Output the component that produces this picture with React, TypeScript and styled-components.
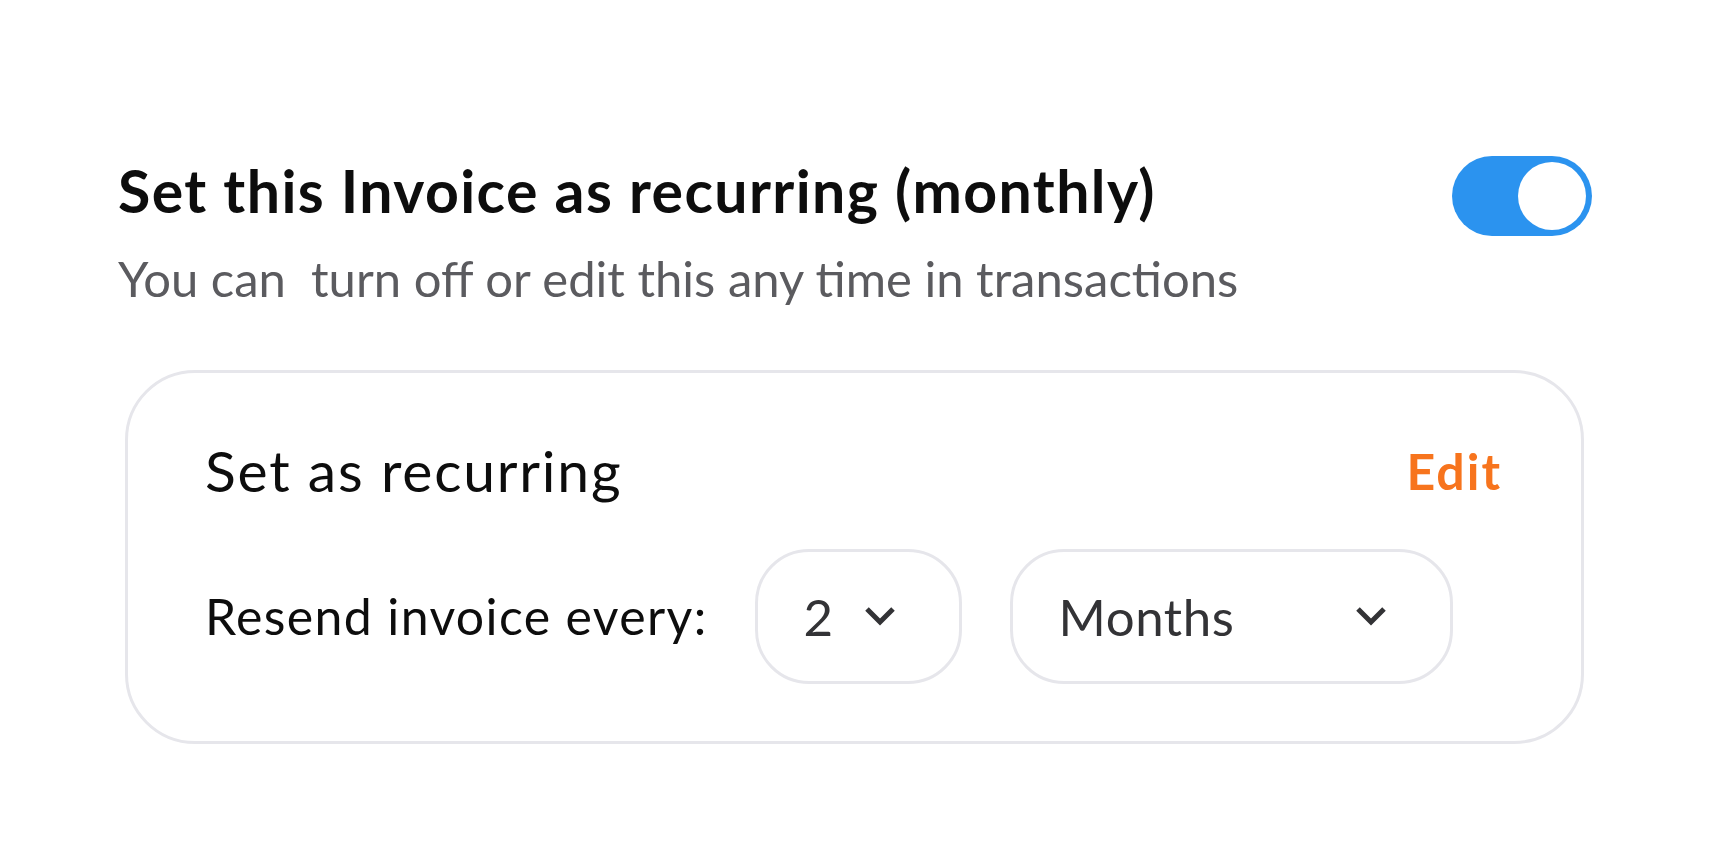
import React from 'react';
import styled, { createGlobalStyle } from 'styled-components';

const GlobalStyle = createGlobalStyle`
  html, body {
    margin: 0;
    padding: 0;
    background: #ffffff;
  }

  body {
    font-family: Lato, 'Noto Sans', sans-serif;
    color: #111111;
  }

  * {
    box-sizing: border-box;
  }
`;

const Page = styled.div`
  padding: 156px 120px 0 118px;
`;

const HeaderRow = styled.div`
  display: flex;
  justify-content: space-between;
  align-items: flex-start;
`;

const HeaderText = styled.div`
  display: flex;
  flex-direction: column;
`;

const Title = styled.h1`
  margin: 0;
  font-size: 59px;
  font-weight: 700;
  line-height: 1.18;
  letter-spacing: 1.4px;
  color: #0d0d0d;
`;

const Subtitle = styled.p`
  margin: 23px 0 0;
  font-size: 49px;
  font-weight: 400;
  line-height: 1.2;
  color: #5b5b5f;
  white-space: pre;
`;

const Toggle = styled.button<{ $on: boolean }>`
  position: relative;
  flex: none;
  width: 140px;
  height: 80px;
  padding: 0;
  border: none;
  border-radius: 40px;
  background: ${p => (p.$on ? '#2b93ef' : '#d9d9de')};
  cursor: pointer;

  &::after {
    content: '';
    position: absolute;
    top: 6px;
    left: ${p => (p.$on ? '66px' : '6px')};
    width: 68px;
    height: 68px;
    border-radius: 50%;
    background: #ffffff;
  }
`;

const Card = styled.section`
  margin: 63px 8px 0 7px;
  padding: 64px 79px 57px 77px;
  border: 3px solid #e6e6eb;
  border-radius: 70px;
`;

const CardHead = styled.div`
  display: flex;
  justify-content: space-between;
  align-items: center;
`;

const CardTitle = styled.h2`
  margin: 0;
  font-size: 57px;
  font-weight: 400;
  line-height: 1.18;
  letter-spacing: 1.8px;
  color: #0d0d0d;
`;

const EditLink = styled.a`
  font-size: 50px;
  font-weight: 700;
  line-height: 1.2;
  letter-spacing: 2px;
  color: #f7741d;
  text-decoration: none;
  cursor: pointer;
`;

const CardRow = styled.div`
  display: flex;
  align-items: center;
  gap: 48px;
  margin-top: 44px;
`;

const RowLabel = styled.span`
  font-size: 50px;
  line-height: 1.2;
  letter-spacing: 1.35px;
  color: #0d0d0d;
`;

const Select = styled.div<{ $width: number }>`
  display: flex;
  align-items: center;
  justify-content: space-between;
  width: ${p => p.$width}px;
  height: 135px;
  padding: 0 63px 0 45px;
  border: 3px solid #e6e6eb;
  border-radius: 54px;
  cursor: pointer;
`;

const SelectValue = styled.span`
  font-size: 51px;
  line-height: 1.2;
  letter-spacing: 0.6px;
  color: #333336;
`;

const Chevron = () => (
  <svg width="32" height="20" viewBox="0 0 32 20" fill="none">
    <polyline points="3,3 16,16 29,3" stroke="#333336" strokeWidth="5" strokeLinejoin="miter" />
  </svg>
);

const App: React.FC = () => {
  return (
    <Page>
      <GlobalStyle />
      <HeaderRow>
        <HeaderText>
          <Title>Set this Invoice as recurring (monthly)</Title>
          <Subtitle>You can  turn off or edit this any time in transactions</Subtitle>
        </HeaderText>
        <Toggle $on aria-label="Recurring" />
      </HeaderRow>

      <Card>
        <CardHead>
          <CardTitle>Set as recurring</CardTitle>
          <EditLink>Edit</EditLink>
        </CardHead>
        <CardRow>
          <RowLabel>Resend invoice every:</RowLabel>
          <Select $width={207}>
            <SelectValue>2</SelectValue>
            <Chevron />
          </Select>
          <Select $width={443}>
            <SelectValue>Months</SelectValue>
            <Chevron />
          </Select>
        </CardRow>
      </Card>
    </Page>
  );
};

export default App;
